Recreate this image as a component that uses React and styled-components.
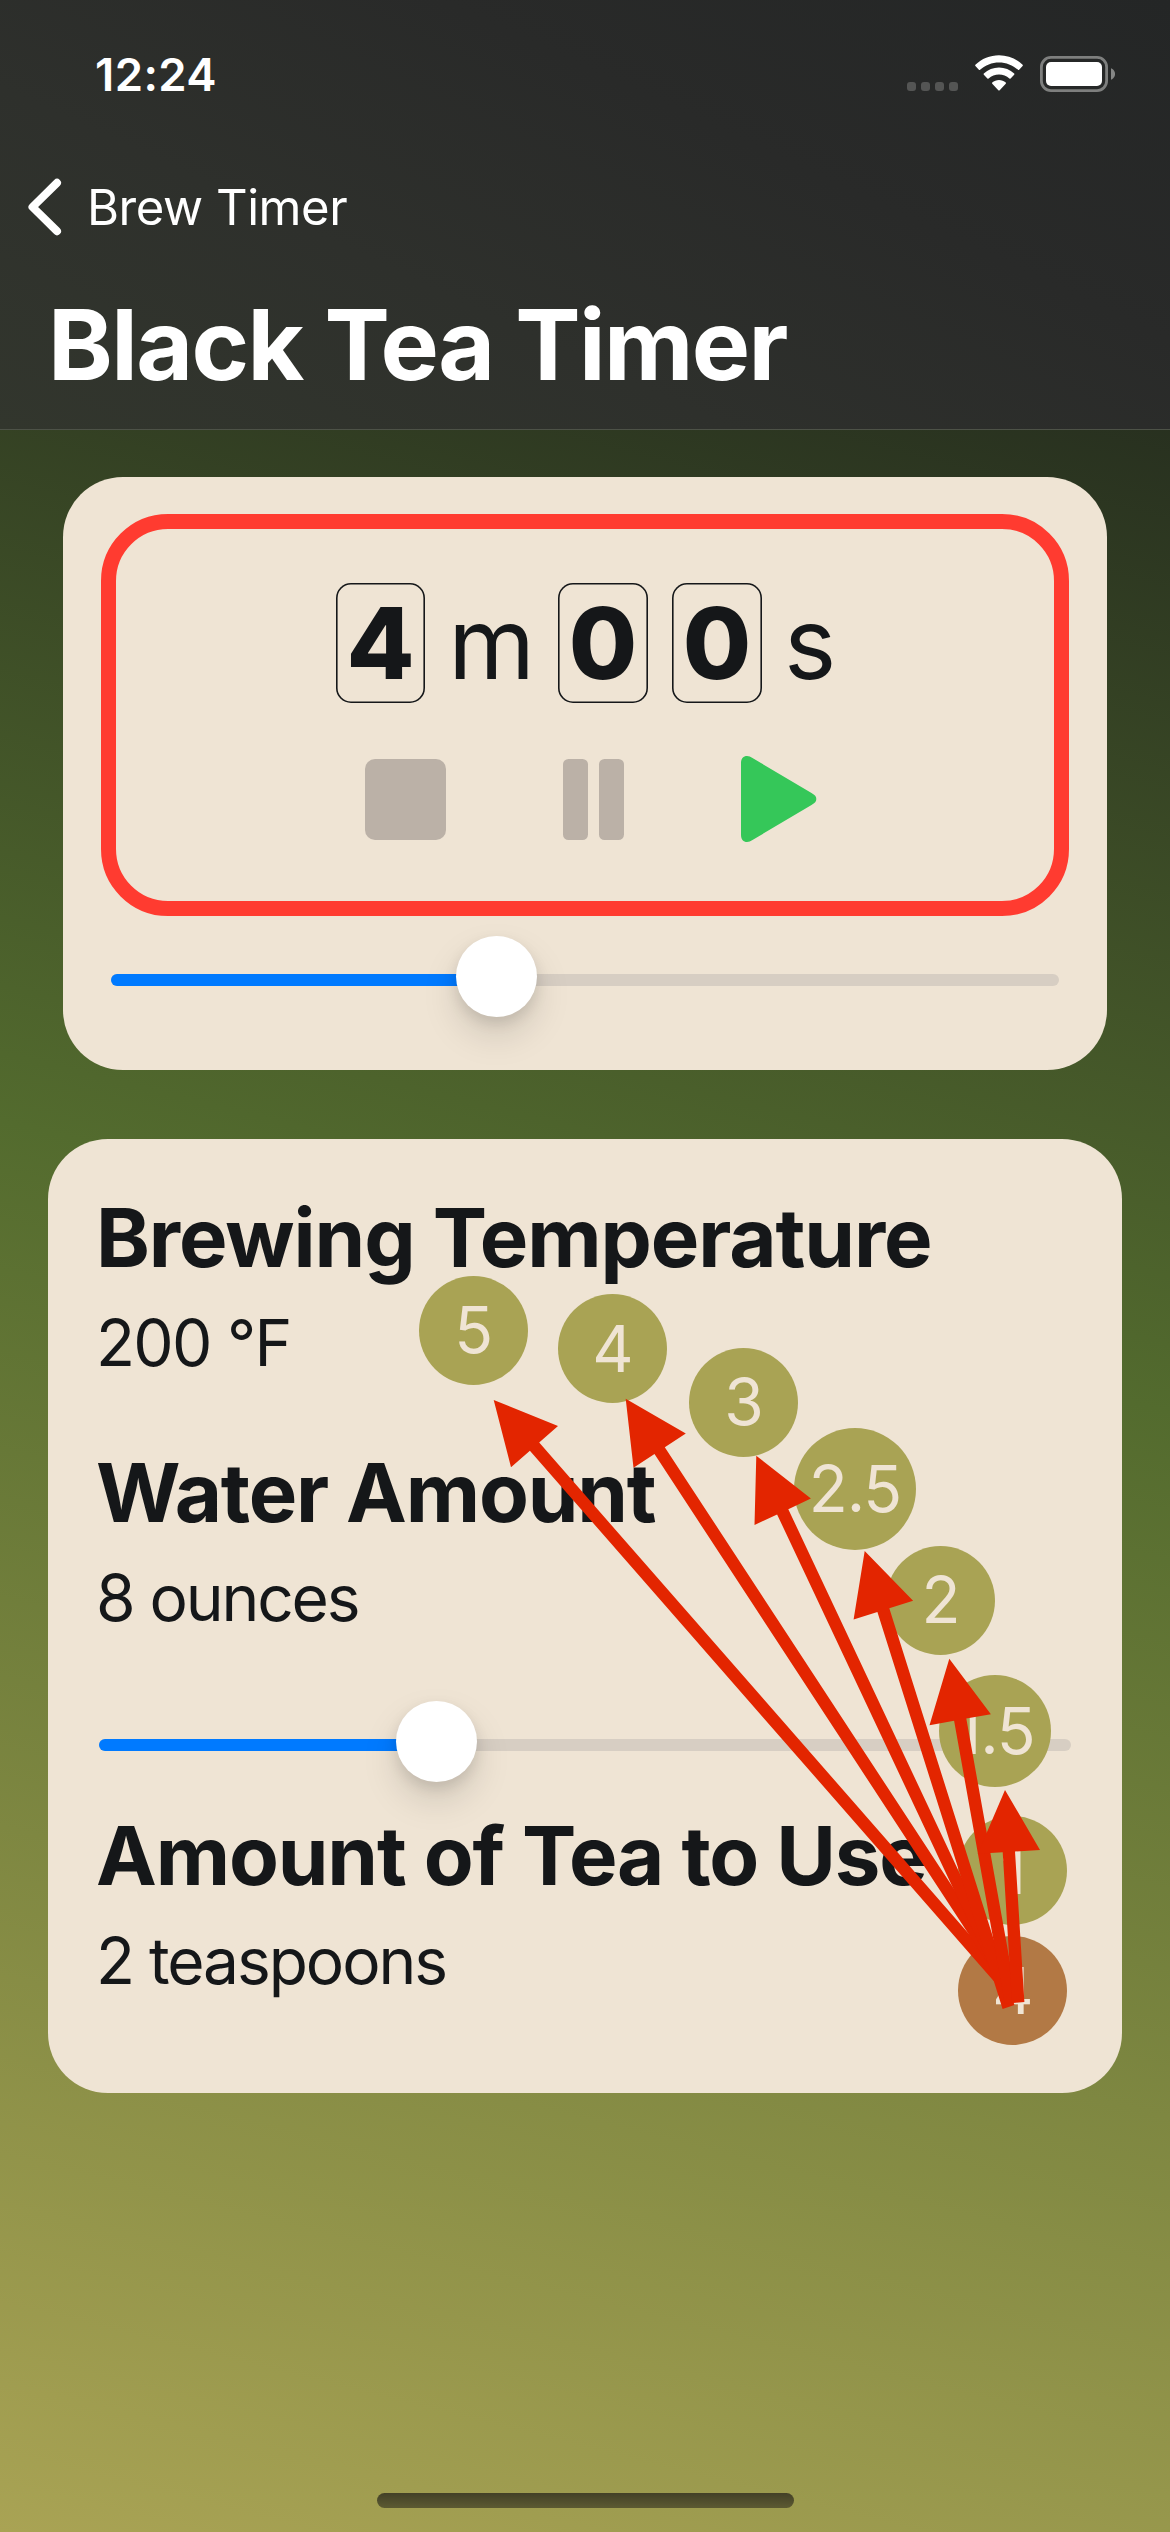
import React from "react";
import styled, { createGlobalStyle } from "styled-components";

const INK = "#151719";
const CREAM = "#efe4d4";
const OLIVE = "#a9a354";
const BROWN = "#b27945";

const GlobalStyle = createGlobalStyle`
  *, *::before, *::after { box-sizing: border-box; }
  body { margin: 0; background: ${OLIVE}; }
`;

const Screen = styled.div`
  position: relative;
  display: flex;
  flex-direction: column;
  width: 1170px;
  height: 2532px;
  overflow: hidden;
  font-family: Inter, "Liberation Sans", sans-serif;
  color: ${INK};
  background: linear-gradient(194deg, #151719 0%, #536b2e 50%, ${OLIVE} 100%);
`;

const Header = styled.header`
  flex: none;
  height: 430px;
  border-bottom: 1px solid #4d5247;
  color: #fff;
  background: linear-gradient(205deg, #242626 0%, #292a29 35%, #2e302c 65%, #32362d 100%);
`;

const StatusBar = styled.div`
  display: flex;
  align-items: center;
  height: 148px;
  padding: 0 55px 0 95px;
`;

const Clock = styled.time`
  margin-right: auto;
  font-size: 45.5px;
  font-weight: 600;
  letter-spacing: ${(p) => p.$tracking}px;
`;

const Signal = styled.div`
  display: flex;
  gap: 4.7px;
  margin-right: 17px;
  padding-top: 25px;
`;

const SignalDot = styled.span`
  width: 9.3px;
  height: 9.3px;
  border-radius: 3px;
  background: #545554;
`;

const WifiIcon = styled.svg`
  display: block;
  width: 48px;
  height: 36px;
  margin: 0 17px 2px 0;
`;

const BatteryIcon = styled.svg`
  display: block;
  width: 75px;
  height: 36px;
`;

const NavBar = styled.nav`
  display: flex;
  align-items: center;
  gap: 25px;
  height: 118px;
  padding-left: 27px;
`;

const BackIcon = styled.svg`
  width: 35px;
  height: 58px;
`;

const BackLabel = styled.span`
  font-size: 49px;
  letter-spacing: ${(p) => p.$tracking}px;
`;

const Title = styled.h1`
  margin: 0;
  padding-left: 48px;
  font-size: 98px;
  line-height: 158px;
  font-weight: 700;
  letter-spacing: ${(p) => p.$tracking}px;
`;

const Main = styled.main`
  display: flex;
  flex-direction: column;
  gap: 69px;
  padding-top: 47px;
`;

const Card = styled.section`
  border-radius: 60px;
  background: ${CREAM};
`;

const TimerCard = styled(Card)`
  height: 593px;
  margin: 0 63px;
  padding: 37px 38px 0;
`;

const DetailsCard = styled(Card)`
  height: 954px;
  margin: 0 48px;
  padding: 49px 48px 0;
`;

const TimerFrame = styled.div`
  display: flex;
  flex-direction: column;
  align-items: center;
  height: 402px;
  padding-top: 54px;
  border: 15px solid #ff3b30;
  border-radius: 67px;
`;

const Readout = styled.div`
  display: flex;
  align-items: center;
  gap: 24px;
  font-size: 99px;
  line-height: 116px;
`;

const Digit = styled.span`
  display: flex;
  align-items: center;
  justify-content: center;
  width: ${(p) => p.$width}px;
  height: 120px;
  border-radius: 15px;
  box-shadow: inset 0 0 0 1.6px ${INK};
  font-weight: 800;
`;

const Unit = styled.span`
  display: flex;
  justify-content: center;
  width: ${(p) => p.$width}px;
`;

const Controls = styled.div`
  display: flex;
  align-items: center;
  gap: 117px;
  height: 88px;
  margin-top: 52px;
  padding-left: 12px;
`;

const ControlButton = styled.button`
  display: flex;
  padding: 0;
  border: 0;
  background: none;
  color: ${(p) => p.$color};
`;

const SliderBox = styled.div`
  position: relative;
  display: flex;
  align-items: center;
  height: 81px;
  margin: ${(p) => p.$top}px ${(p) => p.$inset}px 0;
`;

const Track = styled.div`
  flex: 1;
  height: 12px;
  margin-top: 7px;
  border-radius: 6px;
  overflow: hidden;
  background: #d7cec3;
`;

const Fill = styled.div`
  width: ${(p) => p.$width}px;
  height: 100%;
  background: #007aff;
`;

const Thumb = styled.div`
  position: absolute;
  top: 0;
  left: ${(p) => p.$center - 40.5}px;
  width: 81px;
  height: 81px;
  border-radius: 50%;
  background: #fff;
  box-shadow: 0 18px 36px rgba(0, 0, 0, 0.13), 0 6px 14px rgba(0, 0, 0, 0.1);
`;

const Heading = styled.h2`
  margin: ${(p) => p.$top || 0}px 0 0;
  font-size: 81.5px;
  line-height: 100px;
  font-weight: 700;
  letter-spacing: ${(p) => p.$tracking}px;
  white-space: nowrap;
`;

const Value = styled.p`
  margin: 15px 0 0;
  font-size: 64px;
  line-height: 80px;
  letter-spacing: ${(p) => p.$tracking}px;
`;

const Bubble = styled.button`
  position: absolute;
  left: ${(p) => p.$x - p.$size / 2}px;
  top: ${(p) => p.$y - p.$size / 2}px;
  display: flex;
  align-items: center;
  justify-content: center;
  width: ${(p) => p.$size}px;
  height: ${(p) => p.$size}px;
  padding: 0;
  border: 0;
  border-radius: 50%;
  background: ${(p) => p.$color || OLIVE};
  color: ${CREAM};
  font-family: inherit;
  font-size: 64px;
  line-height: 80px;
  letter-spacing: -1px;
`;

const ArrowLayer = styled.svg`
  position: absolute;
  top: 0;
  left: 0;
  width: 1170px;
  height: 2532px;
  pointer-events: none;
`;

const HomeIndicator = styled.div`
  width: 417px;
  height: 15px;
  margin: auto auto 24px 377px;
  border-radius: 7.5px;
  background: linear-gradient(180deg, #434027, #5c5a32);
`;

const bubbles = [
  { label: "5", x: 473.2, y: 1330.3, size: 109 },
  { label: "4", x: 612.5, y: 1348.5, size: 109 },
  { label: "3", x: 743.5, y: 1402.3, size: 109 },
  { label: "2.5", x: 855, y: 1488.8, size: 122 },
  { label: "2", x: 940.5, y: 1600.4, size: 109 },
  { label: "1.5", x: 995, y: 1730.8, size: 112 },
  { label: "1", x: 1012.5, y: 1870.5, size: 109 },
  { label: "4", x: 1012.5, y: 1990.5, size: 109, color: BROWN },
];

const arrows = [
  { tip: [493.7, 1400], tail: [1008, 1988] },
  { tip: [625.7, 1398.7], tail: [1014, 1992] },
  { tip: [756.3, 1455.7], tail: [1012.5, 2000] },
  { tip: [864.7, 1551], tail: [1008.5, 2007] },
  { tip: [949.3, 1658.7], tail: [1011, 2003] },
  { tip: [1005, 1790], tail: [1018.2, 2002.5] },
];

const HEAD_LENGTH = 62;
const HEAD_HALF = 31.2;
const SHAFT_HALF = 6.2;

function arrowPoints({ tip, tail }) {
  const dx = tail[0] - tip[0];
  const dy = tail[1] - tip[1];
  const length = Math.hypot(dx, dy);
  const ux = dx / length;
  const uy = dy / length;
  const at = (along, side) =>
    `${(tip[0] + ux * along - uy * side).toFixed(1)},${(tip[1] + uy * along + ux * side).toFixed(1)}`;
  return [
    at(0, 0),
    at(HEAD_LENGTH, HEAD_HALF),
    at(HEAD_LENGTH, SHAFT_HALF),
    at(length, SHAFT_HALF),
    at(length, -SHAFT_HALF),
    at(HEAD_LENGTH, -SHAFT_HALF),
    at(HEAD_LENGTH, -HEAD_HALF),
  ].join(" ");
}

function Slider({ value, top, inset }) {
  return (
    <SliderBox $top={top} $inset={inset}>
      <Track>
        <Fill $width={value} />
      </Track>
      <Thumb $center={value} />
    </SliderBox>
  );
}

export default function App() {
  return (
    <>
      <GlobalStyle />
      <Screen>
        <Header>
          <StatusBar>
            <Clock $tracking={0.4}>12:24</Clock>
            <Signal>
              <SignalDot />
              <SignalDot />
              <SignalDot />
              <SignalDot />
            </Signal>
            <WifiIcon viewBox="0 0 48.4 36">
              <path
                fill="#fff"
                d="M24.2 0C33.2 0 41.700 3.500 48 9.700Q48.600 10.300 48 10.900L44.500 14.700Q43.900 15.300 43.300 14.700C38.100 9.900 31.300 7.300 24.200 7.300S10.300 9.900 5.100 14.700Q4.500 15.300 3.900 14.700L.4 10.900Q-.2 10.300 .4 9.700C6.700 3.500 15.200 0 24.200 0Z"
              />
              <path
                fill="#fff"
                d="M24.200 12.500C29.900 12.500 35.400 14.700 39.500 18.600Q40.100 19.200 39.500 19.800L35.900 23.500Q35.300 24.100 34.700 23.500C31.800 20.900 28.100 19.500 24.200 19.500S16.600 20.900 13.700 23.500Q13.100 24.100 12.500 23.500L8.900 19.800Q8.300 19.200 8.900 18.600C13 14.700 18.500 12.500 24.200 12.500Z"
              />
              <path
                fill="#fff"
                d="M24.200 25C26.700 25 29.200 25.900 31 27.600Q31.600 28.200 31 28.800L24.900 35.300Q24.200 36 23.500 35.300L17.400 28.800Q16.800 28.200 17.400 27.600C19.200 25.900 21.700 25 24.200 25Z"
              />
            </WifiIcon>
            <BatteryIcon viewBox="0 0 75 36">
              <rect x="1.400" y="1.400" width="65.200" height="33.200" rx="9.500" fill="none" stroke="#7e7f7e" strokeWidth="2.800" />
              <rect x="6" y="6" width="56" height="24" rx="5" fill="#fff" />
              <path fill="#858685" d="M71 12.200c2.500 1 4.100 3.200 4.100 5.800s-1.600 4.800-4.100 5.800z" />
            </BatteryIcon>
          </StatusBar>
          <NavBar>
            <BackIcon viewBox="0 0 35 58">
              <path
                d="M30 4.800 5.500 29 30 53.200"
                fill="none"
                stroke="#fff"
                strokeWidth="8"
                strokeLinecap="round"
                strokeLinejoin="round"
              />
            </BackIcon>
            <BackLabel $tracking={-0.45}>Brew Timer</BackLabel>
          </NavBar>
          <Title $tracking={-1.6}>Black Tea Timer</Title>
        </Header>

        <Main>
          <TimerCard>
            <TimerFrame>
              <Readout>
                <Digit $width={89}>4</Digit>
                <Unit $width={85}>m</Unit>
                <Digit $width={90}>0</Digit>
                <Digit $width={90}>0</Digit>
                <Unit $width={48}>s</Unit>
              </Readout>
              <Controls>
                <ControlButton $color="#bbb1a7" aria-label="Stop">
                  <svg width="81" height="81" viewBox="0 0 81 81">
                    <rect width="81" height="81" rx="10" fill="currentColor" />
                  </svg>
                </ControlButton>
                <ControlButton $color="#bbb1a7" aria-label="Pause">
                  <svg width="61" height="81" viewBox="0 0 61 81">
                    <rect width="25" height="81" rx="5.500" fill="currentColor" />
                    <rect x="36" width="25" height="81" rx="5.500" fill="currentColor" />
                  </svg>
                </ControlButton>
                <ControlButton $color="#35c759" aria-label="Play">
                  <svg width="76" height="86" viewBox="0 0 76 86">
                    <path
                      fill="currentColor"
                      d="M0 7C0 2.500 2.500 0 6 0 8 0 9.500.8 11.500 2L70.500 37C74 39 75.300 40.500 75.300 43S74 47 70.500 49L11.500 84C9.500 85.200 8 86 6 86 2.500 86 0 83.500 0 79Z"
                    />
                  </svg>
                </ControlButton>
              </Controls>
            </TimerFrame>
            <Slider value={385.3} top={20} inset={10} />
          </TimerCard>

          <DetailsCard>
            <Heading $tracking={-1.08}>Brewing Temperature</Heading>
            <Value $tracking={-1.7}>200 °F</Value>
            <Heading $top={60} $tracking={-1.2}>Water Amount</Heading>
            <Value $tracking={-2.1}>8 ounces</Value>
            <Slider value={337.4} top={63} inset={3} />
            <Heading $top={24} $tracking={-1.15}>Amount of Tea to Use</Heading>
            <Value $tracking={-2.05}>2 teaspoons</Value>
          </DetailsCard>
        </Main>

        {bubbles.map((b, i) => (
          <Bubble key={i} $x={b.x} $y={b.y} $size={b.size} $color={b.color}>
            {b.label}
          </Bubble>
        ))}

        <ArrowLayer viewBox="0 0 1170 2532">
          {arrows.map((a, i) => (
            <polygon key={i} points={arrowPoints(a)} fill="#e32500" />
          ))}
        </ArrowLayer>

        <HomeIndicator />
      </Screen>
    </>
  );
}
